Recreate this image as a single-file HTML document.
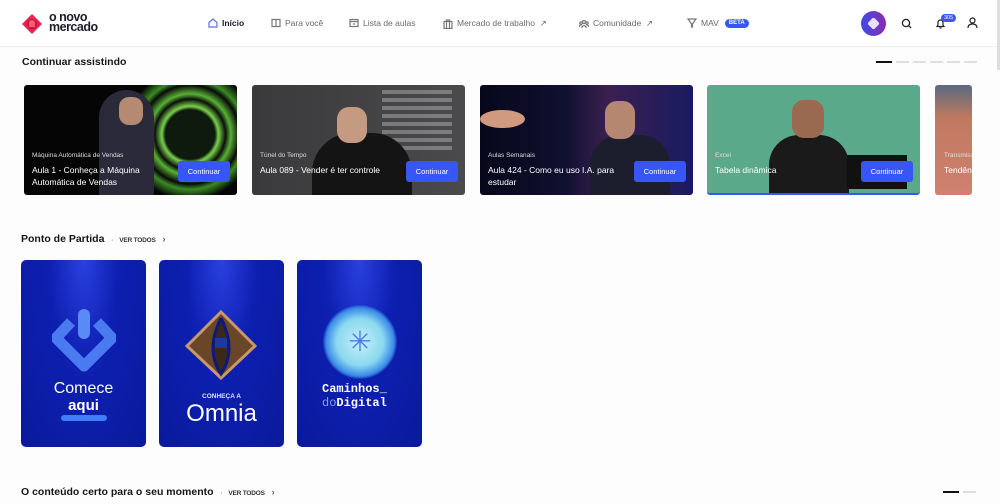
<!DOCTYPE html>
<html><head><meta charset="utf-8">
<style>
*{box-sizing:border-box;margin:0;padding:0}
body{width:1000px;height:504px;overflow:hidden;background:#fdfdfe;font-family:"Liberation Sans",sans-serif;color:#1a1a22;position:relative}
.hdr{position:absolute;left:0;top:0;width:1000px;height:47px;border-bottom:1px solid #ececf0;background:#fff}
.nav{position:absolute;top:18px;font-size:8.5px;color:#666a75;display:flex;align-items:center;gap:4px}
.nav svg{width:10px;height:10px;stroke:#777;fill:none;stroke-width:1.2}
.h2{position:absolute;font-weight:bold;font-size:10.5px;color:#15151c}
.vt{font-size:6.5px;font-weight:bold;color:#333;letter-spacing:-.2px}
.card{position:absolute;top:85px;width:213px;height:110px;border-radius:3px;overflow:hidden}
.card .sub{position:absolute;left:8px;top:67px;font-size:6.5px;color:#ddd}
.card .t{position:absolute;left:8px;top:79px;font-size:8.5px;color:#fff;line-height:12px;width:140px}
.card .b{position:absolute;right:7px;top:76px;width:52px;height:21px;background:#3756f5;border-radius:3px;color:#fff;font-size:7.5px;text-align:center;line-height:21px}
.p{position:absolute;top:260px;width:125px;height:187px;border-radius:5px;overflow:hidden;background:radial-gradient(ellipse at 50% 0%,#2a40e0 0%,#0d1fb0 40%,#0a1a9c 100%)}
.dots{position:absolute;display:flex;gap:4px}
.dots i{display:block;width:13px;height:2px;background:#dedee4}
.dots i:first-child{width:16px;background:#111}
</style></head><body>
<div class="hdr">
 <svg style="position:absolute;left:21px;top:13px" width="22" height="22" viewBox="0 0 22 22"><path d="M11 1 L21 11 L11 21 L1 11Z" fill="#e8234f"/><circle cx="11" cy="11" r="5" fill="#c8123a"/><path d="M8 9q3-4 6 0v5h-6z" fill="#ff5a7a"/></svg>
 <div style="position:absolute;left:49px;top:13px;font-size:12.5px;font-weight:bold;line-height:9.5px;color:#1b1b2a;letter-spacing:-.5px">o novo<br>mercado</div>
 <div class="nav" style="left:208px;color:#1a1a2a;font-weight:bold"><svg viewBox="0 0 10 10" style="stroke:#5a70e8"><path d="M1 4.5L5 1l4 3.5V9H1z"/></svg>Início</div>
 <div class="nav" style="left:271px"><svg viewBox="0 0 10 10"><rect x="1" y="1.5" width="8" height="7"/><path d="M5 1.5v7"/></svg>Para você</div>
 <div class="nav" style="left:349px"><svg viewBox="0 0 10 10"><rect x="1" y="1.5" width="8" height="7"/><path d="M1 3.5h8M4 6h2"/></svg>Lista de aulas</div>
 <div class="nav" style="left:443px"><svg viewBox="0 0 10 10"><rect x="1" y="2.5" width="8" height="7"/><path d="M3.5 2.5V1h3v1.5M3.5 2.5v7M6.5 2.5v7"/></svg>Mercado de trabalho&nbsp;&nbsp;↗</div>
 <div class="nav" style="left:579px"><svg viewBox="0 0 10 10"><circle cx="5" cy="3" r="1.5"/><circle cx="2" cy="4" r="1.2"/><circle cx="8" cy="4" r="1.2"/><path d="M2.5 9q2.5-5 5 0M0 8q1-3 3-2M10 8q-1-3-3-2"/></svg>Comunidade&nbsp;&nbsp;↗</div>
 <div class="nav" style="left:687px"><svg viewBox="0 0 10 10"><path d="M1 1h8L5.5 6v3h-1V6z"/></svg>MAV <span style="background:#3756f5;color:#fff;font-size:6px;font-weight:bold;border-radius:6px;padding:1.5px 4px;margin-left:2px">BETA</span></div>
 <div style="position:absolute;left:861px;top:11px;width:25px;height:25px;border-radius:50%;background:linear-gradient(90deg,#3d4de8,#8a2ab0)"><div style="position:absolute;left:8px;top:8px;width:9px;height:9px;background:#fff;transform:rotate(45deg);border-radius:2px;opacity:.85"></div></div>
 <svg style="position:absolute;left:901px;top:18px" width="11" height="11" viewBox="0 0 11 11" fill="none" stroke="#222" stroke-width="1.3"><circle cx="5" cy="5" r="3.6"/><path d="M7.7 7.7L10 10"/></svg>
 <svg style="position:absolute;left:935px;top:18px" width="11" height="11" viewBox="0 0 11 11" fill="none" stroke="#222" stroke-width="1.2"><path d="M2 8.5h7L8 7V4.5a2.5 2.5 0 0 0-5 0V7zM4.5 10h2"/></svg>
 <div style="position:absolute;left:941px;top:14px;background:#3756f5;color:#fff;font-size:5.5px;border-radius:5px;padding:1px 3px">305</div>
 <svg style="position:absolute;left:967px;top:17px" width="11" height="12" viewBox="0 0 11 12" fill="none" stroke="#222" stroke-width="1.2"><circle cx="5.5" cy="3.5" r="2.5"/><path d="M1 11q0-4 4.5-4t4.5 4"/></svg>
 <div style="position:absolute;left:997px;top:0;width:3px;height:70px;background:#ddd"></div>
</div>
<div class="h2" style="left:22px;top:56px">Continuar assistindo</div>
<div class="dots" style="left:876px;top:61px"><i></i><i></i><i></i><i></i><i></i><i></i></div>

<div class="card" style="left:24px;background:radial-gradient(circle at 78% 45%,#0d1a0d 0,#0d1a0d 14%,#7ad14a 16%,#0a0f0a 20%,#58b035 23%,#080a08 28%,#3a8a25 31%,#050505 37%),#050505">
 <div style="position:absolute;left:75px;top:5px;width:55px;height:105px;background:#2a2a3a;border-radius:30px 30px 0 0"></div><div style="position:absolute;left:95px;top:12px;width:24px;height:28px;background:#b48a72;border-radius:10px"></div>
 <div class="sub">Máquina Automática de Vendas</div><div class="t">Aula 1 - Conheça a Máquina Automática de Vendas</div><div class="b">Continuar</div></div>
<div class="card" style="left:252px;background:linear-gradient(90deg,#3a3a3c,#4a4a4c)">
 <div style="position:absolute;left:130px;top:5px;width:70px;height:60px;background:repeating-linear-gradient(0deg,#bbb 0 4px,transparent 4px 8px);opacity:.45"></div>
 <div style="position:absolute;left:60px;top:48px;width:100px;height:62px;background:#141414;border-radius:40px 40px 0 0"></div><div style="position:absolute;left:85px;top:22px;width:30px;height:36px;background:#c49a80;border-radius:12px"></div>
 <div class="sub">Túnel do Tempo</div><div class="t" style="width:150px">Aula 089 - Vender é ter controle</div><div class="b">Continuar</div></div>
<div class="card" style="left:480px;background:linear-gradient(90deg,#07071a 0,#101030 40%,#3a2050 60%,#1a1a60 100%)">
 <div style="position:absolute;left:0;top:25px;width:45px;height:18px;background:#d09a80;border-radius:50%"></div>
 <div style="position:absolute;left:110px;top:50px;width:80px;height:60px;background:#1c1e2e;border-radius:30px 30px 0 0"></div><div style="position:absolute;left:125px;top:16px;width:30px;height:38px;background:#b58770;border-radius:12px"></div>
 <div class="sub">Aulas Semanais</div><div class="t">Aula 424 - Como eu uso I.A. para estudar</div><div class="b">Continuar</div></div>
<div class="card" style="left:707px;background:#5aa98a;border-bottom:2px solid #3756f5">
 <div style="position:absolute;left:62px;top:50px;width:80px;height:60px;background:#1a1a1a;border-radius:30px 30px 0 0"></div><div style="position:absolute;left:85px;top:15px;width:32px;height:38px;background:#9a6a50;border-radius:12px"></div>
 <div style="position:absolute;left:140px;top:70px;width:60px;height:34px;background:#111"></div>
 <div class="sub">Excel</div><div class="t">Tabela dinâmica</div><div class="b">Continuar</div></div>
<div class="card" style="left:935px;width:37px;background:linear-gradient(180deg,#5a6a80 0,#c07a60 30%,#d08070 100%)">
 <div class="sub" style="left:9px">Transmissão</div><div class="t" style="left:9px">Tendência</div></div>

<div class="h2" style="left:21px;top:233px">Ponto de Partida <span class="vt" style="margin-left:4px;color:#888">·</span> <span class="vt" style="margin-left:3px">VER TODOS</span> <span style="font-size:9px;color:#555;margin-left:4px">›</span></div>

<div class="p" style="left:21px">
 <svg style="position:absolute;left:31px;top:46px" width="64" height="66" viewBox="0 0 64 66"><path d="M19 16 L4 32 L32 60 L60 32 L45 16" fill="none" stroke="#4a7af0" stroke-width="11" stroke-linejoin="round"/><rect x="26" y="3" width="12" height="30" rx="6" fill="#5a8af5"/></svg>
 <div style="position:absolute;top:120px;width:100%;text-align:center;color:#fff;font-size:16px">Comece</div>
 <div style="position:absolute;top:137px;width:100%;text-align:center;color:#fff;font-size:15px;font-weight:bold">aqui</div>
 <div style="position:absolute;left:40px;top:155px;width:46px;height:6px;background:#3f7cf5;border-radius:3px"></div>
</div>
<div class="p" style="left:159px">
 <svg style="position:absolute;left:26px;top:50px" width="72" height="70" viewBox="0 0 72 70"><path d="M36 2 L70 36 L36 68 L2 36Z" fill="#6a4628"/><path d="M36 2 L70 36 L36 68 L2 36Z" fill="none" stroke="#c89868" stroke-width="3"/><path d="M36 8 Q20 40 36 64 Q52 40 36 8" fill="#3a2818" stroke="#0c1a80" stroke-width="3"/><rect x="30" y="28" width="12" height="10" fill="#1a3aa0"/></svg>
 <div style="position:absolute;top:133px;width:100%;text-align:center;color:#dfe4ff;font-size:6.5px;font-weight:bold">CONHEÇA A</div>
 <div style="position:absolute;top:140px;width:100%;text-align:center;color:#fff;font-size:24px">Omnia</div>
</div>
<div class="p" style="left:297px">
 <div style="position:absolute;left:26px;top:45px;width:74px;height:74px;border-radius:50%;background:radial-gradient(circle,#c8f0f8 0,#8ad8f0 45%,#3a8ae8 65%,rgba(30,60,200,0) 72%)"></div>
 <div style="position:absolute;left:44px;top:63px;width:38px;height:38px;text-align:center;line-height:38px;color:#4a7ae8;font-size:28px">✳</div>
 <div style="position:absolute;top:122px;left:25px;color:#fff;font-family:'Liberation Mono',monospace;font-size:12px;font-weight:bold">Caminhos_</div>
 <div style="position:absolute;top:136px;left:25px;color:#fff;font-family:'Liberation Mono',monospace;font-size:12px;font-weight:bold"><span style="color:#8aa0f0;font-weight:normal">do</span>Digital</div>
</div>

<div class="h2" style="left:21px;top:486px">O conteúdo certo para o seu momento <span class="vt" style="margin-left:4px;color:#888">·</span> <span class="vt" style="margin-left:3px">VER TODOS</span> <span style="font-size:9px;color:#555;margin-left:4px">›</span></div>
<div class="dots" style="left:943px;top:491px"><i></i><i></i></div>
</body></html>
